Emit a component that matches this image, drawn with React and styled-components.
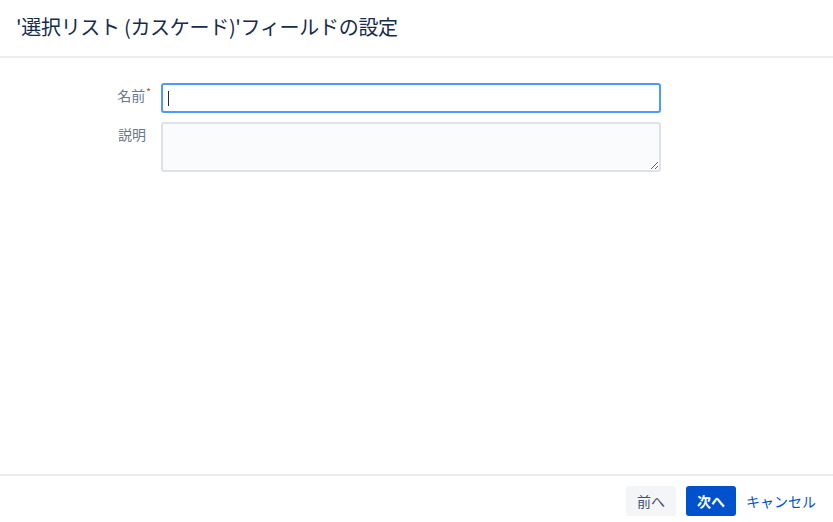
import React from "react";
import styled, { createGlobalStyle } from "styled-components";

const GlobalStyle = createGlobalStyle`
	html, body {
		margin: 0;
		padding: 0;
		background: #fff;
	}
	body {
		font-family: "Noto Sans CJK JP", "Noto Sans", sans-serif;
		color: #172b4d;
	}
`;

function App() {
	return (
		<>
			<GlobalStyle />
			<Dialog>
				<Header>
					<Title>'選択リスト (カスケード)'フィールドの設定</Title>
				</Header>
				<Body>
					<Form>
						<Label>
							名前<Required>*</Required>
						</Label>
						<InputWrap>
							<TextInput type="text" />
						</InputWrap>
						<Label>説明</Label>
						<TextArea />
					</Form>
				</Body>
				<Footer>
					<Button>前へ</Button>
					<Button primary>次へ</Button>
					<LinkButton>キャンセル</LinkButton>
				</Footer>
			</Dialog>
		</>
	);
}

export default App;

const Dialog = styled.div`
	display: flex;
	flex-direction: column;
	width: 833px;
	height: 522px;
	overflow: hidden;
`;

const Header = styled.div`
	display: flex;
	align-items: center;
	height: 56px;
	padding-left: 16px;
	border-bottom: 2px solid #ebecf0;
	flex-shrink: 0;
`;

const Title = styled.h2`
	margin: 0 0 2px;
	font-size: 20px;
	font-weight: 400;
	letter-spacing: -0.3px;
	color: #172b4d;
	line-height: 24px;
`;

const Body = styled.div`
	flex: 1;
	padding-top: 25px;
`;

const Form = styled.div`
	display: grid;
	grid-template-columns: 151px 500px;
	column-gap: 10px;
	row-gap: 9px;
	align-items: start;
`;

const Label = styled.label`
	text-align: right;
	padding-right: 5px;
	padding-top: 2px;
	font-size: 14px;
	line-height: 20px;
	color: #6b778c;
`;

const Required = styled.span`
	color: #de350b;
	font-size: 10px;
	vertical-align: top;
	margin-left: 1px;
	margin-right: -5px;
	line-height: 14px;
`;

const InputWrap = styled.div`
	position: relative;
	&::after {
		content: "";
		position: absolute;
		left: 7px;
		top: 8px;
		width: 1px;
		height: 15px;
		background: #172b4d;
	}
`;

const TextInput = styled.input`
	box-sizing: border-box;
	display: block;
	width: 100%;
	height: 30px;
	border: 2px solid #4c9aff;
	border-radius: 3px;
	background: #fff;
	padding: 0 6px;
	font-family: inherit;
	font-size: 14px;
	color: #172b4d;
	outline: none;
`;

const TextArea = styled.textarea`
	box-sizing: border-box;
	display: block;
	width: 100%;
	height: 50px;
	border: 2px solid #dfe1e6;
	border-radius: 3px;
	background: #fafbfc;
	padding: 4px 6px;
	font-family: inherit;
	font-size: 14px;
	outline: none;
	resize: vertical;
	margin: 0;
`;

const Footer = styled.div`
	display: flex;
	justify-content: flex-end;
	align-items: flex-start;
	gap: 10px;
	height: 48px;
	box-sizing: border-box;
	padding: 10px 17px 0 0;
	border-top: 2px solid #ebecf0;
	flex-shrink: 0;
`;

const Button = styled.button`
	height: 30px;
	padding: 0 11px;
	border: none;
	border-radius: 3px;
	font-family: inherit;
	font-size: 14px;
	line-height: 30px;
	cursor: pointer;
	background: ${(p) => (p.primary ? "#0052cc" : "#f4f5f7")};
	color: ${(p) => (p.primary ? "#fff" : "#42526e")};
	font-weight: ${(p) => (p.primary ? 700 : 400)};
`;

const LinkButton = styled.button`
	height: 30px;
	padding: 0;
	border: none;
	background: none;
	font-family: inherit;
	font-size: 14px;
	line-height: 30px;
	color: #0052cc;
	cursor: pointer;
`;
